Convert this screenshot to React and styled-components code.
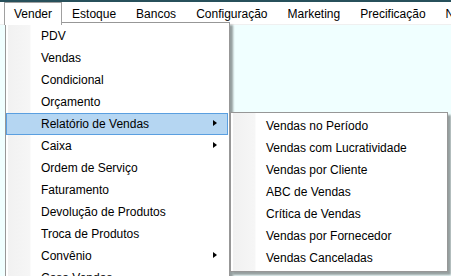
import React from "react";
import styled, { createGlobalStyle } from "styled-components";

const Global = createGlobalStyle`
  html, body { margin: 0; padding: 0; }
  body {
    width: 451px; height: 276px; overflow: hidden;
    background: #f0ffff;
    font-family: "Liberation Sans", Arial, sans-serif;
    font-size: 12px;
    color: #000;
  }
`;

const Screen = styled.div`
  position: relative;
  display: flex;
  flex-direction: column;
  width: 451px;
  height: 276px;
  overflow: hidden;
  background: #f0ffff;
`;

const TitleEdge = styled.div`
  height: 2px;
  flex: none;
  background: #27505b;
`;

const MenuBar = styled.div`
  display: flex;
  align-items: stretch;
  flex: none;
  height: 22px;
  padding-left: 4px;
  background: #ffffff;
  border-bottom: 1px solid #f0f0f0;
  white-space: nowrap;
`;

const BarItem = styled.div`
  display: flex;
  align-items: center;
  position: relative;
  z-index: 3;
  box-sizing: border-box;
  border: 1px solid ${(p) => (p.$open ? "#a0a0a0" : "transparent")};
  border-bottom: none;
  padding: 0 9px;
  background: ${(p) => (p.$open ? "#ffffff" : "transparent")};
  height: ${(p) => (p.$open ? "23px" : "22px")};
`;

const Dropdown = styled.div`
  position: absolute;
  left: ${(p) => p.$left}px;
  top: ${(p) => p.$top}px;
  width: ${(p) => p.$width}px;
  display: flex;
  flex-direction: column;
  box-sizing: border-box;
  border: 1px solid #979797;
  background: #ffffff;
  padding: 2px 0;
  box-shadow: 3px 3px 2px rgba(0, 0, 0, 0.38);
  z-index: ${(p) => p.$z};
  &::before {
    content: "";
    position: absolute;
    left: 2px;
    top: 0;
    bottom: 0;
    width: 22px;
    background: linear-gradient(to right, #f1f1f1, #f6f6f6);
    border-right: 1px solid #fbfbfb;
  }
`;

const Item = styled.div`
  position: relative;
  display: flex;
  align-items: center;
  height: 22px;
  margin-right: 1px;
  box-sizing: border-box;
  padding-left: 34px;
  border: 1px solid ${(p) => (p.$active ? "#5a9fe0" : "transparent")};
  background: ${(p) => (p.$active ? "#b5d6f2" : "transparent")};
  white-space: nowrap;
`;

const Arrow = styled.span`
  position: absolute;
  right: 10px;
  top: 50%;
  margin-top: -4px;
  width: 0;
  height: 0;
  border-top: 3.5px solid transparent;
  border-bottom: 3.5px solid transparent;
  border-left: 4px solid #000;
`;

const menuBar = ["Vender", "Estoque", "Bancos", "Configuração", "Marketing", "Precificação", "Notas"];

const venderItems = [
  { t: "PDV" },
  { t: "Vendas" },
  { t: "Condicional" },
  { t: "Orçamento" },
  { t: "Relatório de Vendas", sub: true, active: true },
  { t: "Caixa", sub: true },
  { t: "Ordem de Serviço" },
  { t: "Faturamento" },
  { t: "Devolução de Produtos" },
  { t: "Troca de Produtos" },
  { t: "Convênio", sub: true },
  { t: "Casa Vendas" },
];

const relItems = [
  "Vendas no Período",
  "Vendas com Lucratividade",
  "Vendas por Cliente",
  "ABC de Vendas",
  "Crítica de Vendas",
  "Vendas por Fornecedor",
  "Vendas Canceladas",
];

export default function App() {
  return (
    <Screen>
      <Global />
      <TitleEdge />
      <MenuBar>
        {menuBar.map((m, i) => (
          <BarItem key={m} $open={i === 0}>
            {m}
          </BarItem>
        ))}
      </MenuBar>
      <Dropdown $left={5} $top={22} $width={225} $z={2}>
        {venderItems.map((it) => (
          <Item key={it.t} $active={it.active}>
            {it.t}
            {it.sub && <Arrow />}
          </Item>
        ))}
      </Dropdown>
      <Dropdown $left={230} $top={112} $width={218} $z={4}>
        {relItems.map((t) => (
          <Item key={t}>{t}</Item>
        ))}
      </Dropdown>
    </Screen>
  );
}
